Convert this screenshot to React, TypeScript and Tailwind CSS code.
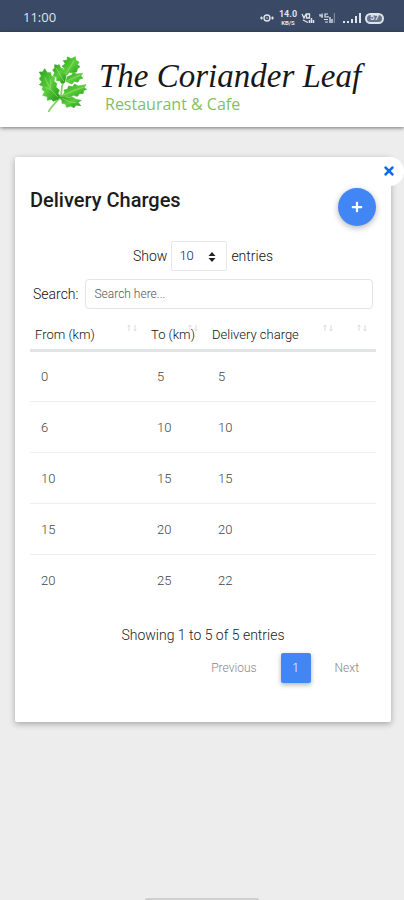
import type { ReactNode } from "react";
import { FaPlus, FaTimes } from "react-icons/fa";

type Charge = {
	from: number;
	to: number;
	charge: number;
};

const charges: Charge[] = [
	{ from: 0, to: 5, charge: 5 },
	{ from: 6, to: 10, charge: 10 },
	{ from: 10, to: 15, charge: 15 },
	{ from: 15, to: 20, charge: 20 },
	{ from: 20, to: 25, charge: 22 },
];

const StatusBar = () => (
	<div className="flex h-8 shrink-0 items-center justify-between bg-[#3a4a66] pt-1 pr-5 pl-[23px] text-[#dfe3ea]">
		<span className="font-['Open_Sans',sans-serif] text-[13px] font-medium">
			11:00
		</span>

		<div className="flex items-center gap-1 font-['Roboto',sans-serif] font-bold">
			<svg className="h-3 w-4" viewBox="0 0 16 12" fill="none" stroke="currentColor">
				<circle cx="8" cy="6" r="3" strokeWidth="1.4" />
				<circle cx="8" cy="6" r="0.8" fill="currentColor" stroke="none" />
				<path d="M1 6h3M12 6h3M2.500 4.500v3M13.500 4.500v3" strokeWidth="1.2" />
			</svg>
			<div className="flex w-[18px] flex-col items-center">
				<span className="text-[9px] leading-[9px]">14.0</span>
				<span className="text-[6px] leading-[7px]">KB/S</span>
			</div>
			<svg className="h-3 w-[14px]" viewBox="0 0 14 12" fill="none" stroke="currentColor">
				<path d="M1 2l2 4 2-4M5.500 2h3v4h-3zM2 8l5 2.500" strokeWidth="1.300" />
				<path d="M8.500 11V8M10.500 11V6M12.500 11V8" strokeWidth="1.500" />
			</svg>
			<svg className="h-3 w-4" viewBox="0 0 16 12" fill="none" stroke="currentColor">
				<path d="M1 2v2h3M3 1.500V6M9 2H6v3h3V4M5 7.500h4M6 10h3" strokeWidth="1.200" />
				<path d="M11 11V5M13 11V7" strokeWidth="1.400" />
				<path d="M15.300 11V1" strokeWidth="1" opacity="0.5" />
			</svg>
			<svg className="ml-1 h-3 w-[18px]" viewBox="0 0 18 12" fill="currentColor">
				<path d="M0 9h2v2H0zM4 9h2v2H4zM8 7h2v4H8zM12 4h2v7h-2zM16 1h2v10h-2z" />
			</svg>
			<div className="flex h-[11px] w-[19px] items-center justify-center rounded-full border-2 border-[#dfe3ea] bg-[#66738a] text-[8px]">
				57
			</div>
		</div>
	</div>
);

const Leaf = () => (
	<svg className="h-14 w-[50px] shrink-0" viewBox="9 12 150 168">
		<defs>
			<linearGradient id="leaf" x1="0" y1="0" x2="1" y2="1">
				<stop offset="0" stopColor="#2a9f1c" />
				<stop offset="0.5" stopColor="#5ccf3c" />
				<stop offset="1" stopColor="#1d9318" />
			</linearGradient>
		</defs>
		<path
			d="M38 178C45 165 60 150 70 140C82 124 72 108 82 92M70 136L100 122"
			fill="none"
			stroke="#86cf63"
			strokeWidth="5"
			strokeLinecap="round"
		/>
		<g fill="url(#leaf)" stroke="url(#leaf)" strokeWidth="2" strokeLinejoin="round">
			<path d="M88 68L80 58L86 50L78 42L88 36L82 26L94 24L94 15L106 20L118 14L120 25L129 30L124 38L132 44L124 50L122 60L108 62L100 61L92 70Z" />
			<path d="M86 92L76 94L72 86L62 86L62 76L52 72L56 62L50 54L56 48L56 38L64 40L70 38L74 48L82 50L82 62L90 72Z" />
			<path d="M90 88L94 74L106 70L112 62L122 66L140 64L134 72L141 78L130 82L126 90L114 88L108 96L98 92Z" />
			<path d="M66 142L52 148L46 142L34 145L34 134L20 130L26 120L18 112L22 104L10 98L18 90L10 80L16 72L10 60L20 60L26 50L34 62L44 62L46 72L56 76L54 88L62 94L60 106L70 114L66 124L72 132Z" />
			<path d="M78 132L86 122L84 114L94 112L98 102L110 104L116 96L126 102L150 98L144 107L152 112L142 116L142 124L130 125L124 133L112 130L102 136Z" />
			<path d="M70 136L84 134L98 138L110 136L120 142L136 145L126 151L134 161L120 159L114 167L104 162L92 166L88 156L78 154L78 146Z" />
		</g>
		<g fill="none" stroke="#b9ec8a" strokeWidth="2.500" opacity="0.6">
			<path d="M90 66L106 40L114 24M84 88L68 62L60 48M94 86L116 76L132 70" />
			<path d="M66 136L44 112L26 76M46 114L28 106M44 110L44 82" />
			<path d="M82 130L112 116L142 106M78 138L100 150L122 152" />
		</g>
	</svg>
);

const Header = () => (
	<header className="relative flex h-[95px] shrink-0 items-start gap-2 overflow-hidden bg-white pt-6 pl-[39px] shadow-[0_1px_4px_rgba(0,0,0,0.5)]">
		<Leaf />
		<div className="whitespace-nowrap">
			<div className="pl-0.5 font-['Liberation_Serif',serif] text-[33px] leading-[40px] text-[#171717] italic">
				The Coriander Leaf
			</div>
			<div className="pl-2 font-['Open_Sans',sans-serif] text-base leading-4 text-[#84bf60]">
				Restaurant &amp; Cafe
			</div>
		</div>
	</header>
);

const SortArrows = () => (
	<svg
		className="absolute top-[7px] right-2 h-2 w-3"
		viewBox="0 0 12 8"
		fill="none"
		stroke="#dadada"
		aria-hidden="true"
	>
		<path d="M3 7V1M1.500 2.500L3 1l1.500 1.500M9 1v6M7.500 5.500L9 7l1.500-1.500" />
	</svg>
);

const HeadCell = ({ children }: { children?: ReactNode }) => (
	<th
		scope="col"
		className="relative h-[33px] pt-1 pl-[5px] text-left text-[13px] font-light whitespace-nowrap"
	>
		{children}
		<SortArrows />
	</th>
);

const ChargesTable = () => (
	<table className="mt-2 w-full table-fixed border-collapse">
		<colgroup>
			<col className="w-[116px]" />
			<col className="w-[61px]" />
			<col className="w-[135px]" />
			<col className="w-[34px]" />
		</colgroup>
		<thead className="border-b-3 border-[#dfe3e3] text-[#111]">
			<tr>
				<HeadCell>From (km)</HeadCell>
				<HeadCell>To (km)</HeadCell>
				<HeadCell>Delivery charge</HeadCell>
				<HeadCell />
			</tr>
		</thead>
		<tbody className="text-[13px] font-light text-[#444]">
			{charges.map(({ from, to, charge }) => (
				<tr
					key={from}
					className="h-[51px] border-b border-[#eeeeee] last:border-0"
				>
					<td className="pt-0.5 pl-[11px]">{from}</td>
					<td className="pt-0.5 pl-[11px]">{to}</td>
					<td className="pt-0.5 pl-[11px]">{charge}</td>
					<td />
				</tr>
			))}
		</tbody>
	</table>
);

const Pagination = () => (
	<nav className="mt-2 flex items-center justify-end pr-[17px] text-xs font-light text-[#888]">
		<button type="button" className="mr-6">
			Previous
		</button>
		<button
			type="button"
			className="size-[30px] rounded-xs bg-[#4285f4] text-white shadow-[0_2px_5px_rgba(0,0,0,0.3)]"
		>
			1
		</button>
		<button type="button" className="ml-6">
			Next
		</button>
	</nav>
);

const App = () => (
	<div className="flex min-h-screen flex-col bg-[#ededed] font-['Roboto',sans-serif]">
		<StatusBar />
		<Header />

		<main className="relative mx-[13px] mt-[30px] ml-[15px] rounded-xs bg-white px-[15px] pt-[30px] pb-[39px] shadow-[0_2px_6px_rgba(0,0,0,0.3)]">
			<button
				type="button"
				aria-label="Close"
				className="absolute top-0 -right-[13px] flex h-[29px] w-[30px] items-center justify-center rounded-full bg-white pb-0.5 text-sm text-[#0c6be8]"
			>
				<FaTimes />
			</button>

			<div className="flex items-start justify-between">
				<h1 className="text-[20px] leading-[26px] font-medium text-[#1c1c1c]">
					Delivery Charges
				</h1>
				<button
					type="button"
					aria-label="Add delivery charge"
					className="mt-px flex size-[38px] items-center justify-center rounded-full bg-[#4285f4] text-xs text-white shadow-[0_2px_6px_rgba(0,0,0,0.3)]"
				>
					<FaPlus />
				</button>
			</div>

			<div className="mt-[15px] flex items-center justify-center gap-1 text-sm font-light text-[#111]">
				<label htmlFor="length">Show</label>
				<div className="relative">
					<select
						id="length"
						defaultValue="10"
						className="h-[30px] w-14 appearance-none rounded-xs border border-[#e8e8e8] bg-white pl-[7px] text-[13px] font-light text-[#222]"
					>
						<option>10</option>
						<option>25</option>
						<option>50</option>
						<option>100</option>
					</select>
					<svg
						className="pointer-events-none absolute top-[11px] right-[11px] h-[10px] w-2"
						viewBox="0 0 8 10"
						fill="#222"
					>
						<path d="M0.500 4L4 0l3.500 4zM0.500 6L4 10l3.500-4z" />
					</svg>
				</div>
				<span>entries</span>
			</div>

			<div className="mt-2 flex items-center gap-[7px] pr-[3px] pl-[3px] text-sm font-light text-[#111]">
				<label htmlFor="search">Search:</label>
				<input
					id="search"
					type="text"
					placeholder="Search here..."
					className="h-[30px] min-w-0 flex-1 rounded-sm border border-[#e4e4e4] bg-white px-2 text-xs font-light placeholder:text-[#555]"
				/>
			</div>

			<ChargesTable />

			<p className="mt-5 text-center text-sm font-light text-[#222]">
				Showing 1 to 5 of 5 entries
			</p>
			<Pagination />
		</main>

		<div className="mx-auto mt-auto h-[2px] w-[114px] rounded-t-sm bg-[#cfcfcf]" />
	</div>
);

export default App;
